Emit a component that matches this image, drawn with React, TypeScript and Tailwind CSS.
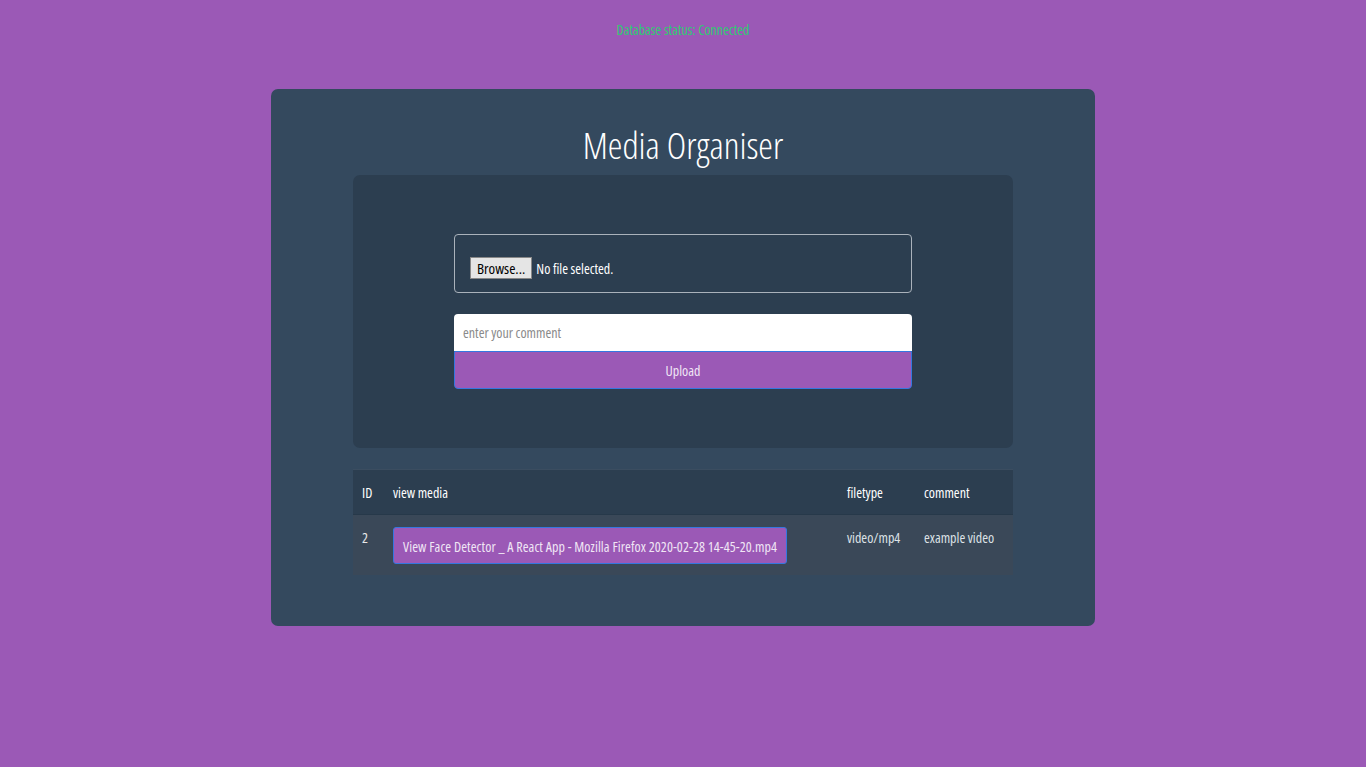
export default function App() {
  const font = { fontFamily: '"Open Sans", "Noto Sans", sans-serif' };
  return (
    <div className="min-h-[767px] w-full bg-[#9b59b6] flex flex-col items-center font-stretch-condensed" style={font}>
      <div className="h-[60px] pt-[21px] text-[14px] leading-[17px] text-[#2ecc71]">Database status: Connected</div>
      <div className="mt-[29px] w-[824px] h-[537px] rounded-[7px] bg-[#34495e] flex flex-col items-center">
        <h1 className="mt-[33px] text-[37px] leading-[46px] font-light text-white">Media Organiser</h1>
        <div className="mt-[7px] w-[660px] h-[273px] rounded-[7px] bg-[#2c3e50] flex flex-col items-center pt-[59px]">
          <div className="w-[458px] h-[59px] rounded-[4px] border border-[#aab2bb] flex items-center px-[15px] pt-[9px]">
            <span className="h-[22px] px-[6px] bg-[#e5e5e5] border border-[#888] text-[15px] leading-[20px] text-black">Browse...</span>
            <span className="ml-[4px] text-[14px] text-white">No file selected.</span>
          </div>
          <div className="mt-[21px] w-[458px] flex flex-col">
            <input
              className="h-[37px] bg-white rounded-t-[4px] px-[9px] text-[14px] outline-none font-stretch-condensed placeholder:text-[#8a8a8a]"
              placeholder="enter your comment"
              style={font}
            />
            <button className="h-[38px] bg-[#9b59b6] border border-[#3577e0] rounded-b-[4px] text-[14px] text-[#f0e6f5] font-stretch-condensed" style={font}>Upload</button>
          </div>
        </div>
        <table className="mt-[21px] w-[660px] table-fixed text-[14px] text-white border-collapse">
          <thead>
            <tr className="bg-[#2c3e50] h-[45px] border-t border-[#3b4d60]">
              <th className="text-left font-medium pl-[9px] w-[31px]">ID</th>
              <th className="text-left font-medium pl-[9px] w-[454px]">view media</th>
              <th className="text-left font-medium pl-[9px] w-[77px]">filetype</th>
              <th className="text-left font-medium pl-[9px]">comment</th>
            </tr>
          </thead>
          <tbody>
            <tr className="bg-[#3a4858] h-[60px] border-t border-[#27394a] align-top">
              <td className="pl-[9px] pt-[12px] text-[#e8e8e8]">2</td>
              <td className="pl-[9px] pt-[12px]">
                <span className="inline-flex items-center h-[37px] pt-[1px] px-[9px] bg-[#9b59b6] border border-[#3577e0] rounded-[3px] text-[#f0e6f5] whitespace-nowrap tracking-[0.1px]">View Face Detector _ A React App - Mozilla Firefox 2020-02-28 14-45-20.mp4</span>
              </td>
              <td className="pl-[9px] pt-[12px] text-[#dde2e6] whitespace-nowrap">video/mp4</td>
              <td className="pl-[9px] pt-[12px] text-[#dde2e6] whitespace-nowrap">example video</td>
            </tr>
          </tbody>
        </table>
      </div>
    </div>
  );
}
